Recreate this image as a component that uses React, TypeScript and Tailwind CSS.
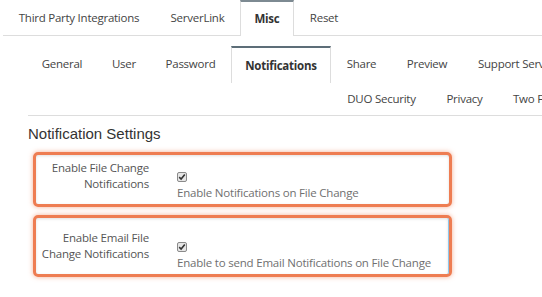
import React from "react";

const UI = { fontFamily: '"Open Sans", "Noto Sans", sans-serif' };

function Check() {
  return (
    <span className="inline-flex h-[10px] w-[10px] items-center justify-center rounded-[2px] border border-[#8a8a8a] bg-[#e6e6e6]">
      <svg width="8" height="8" viewBox="0 0 8 8">
        <path d="M1.2 4.2 L3.1 6 L6.8 1.6" fill="none" stroke="#333" strokeWidth="1.6" />
      </svg>
    </span>
  );
}

function Row({
  l1,
  l2,
  desc,
  pt,
  h,
  blue,
}: {
  l1: string;
  l2: string;
  desc: string;
  pt: string;
  h: string;
  blue?: boolean;
}) {
  return (
    <div
      className={`ml-[33px] w-[419px] ${h} rounded-[5px] border-[3px] border-[#ee7d52] shadow-[0_0_5px_rgba(238,125,82,0.6)]`}
    >
      <div
        className={`flex h-full rounded-[2px] ${pt} shadow-[inset_0_1px_3px_rgba(0,0,0,0.12)] ${
          blue ? "border-r border-[#8fc6ea]" : ""
        }`}
      >
        <div className="w-[113px] shrink-0 whitespace-nowrap text-right text-[11.5px] leading-[16px] tracking-[-0.2px] text-[#555]">
          <div>{l1}</div>
          <div>{l2}</div>
        </div>
        <div className="ml-[28px] flex flex-col">
          <div className="mt-[3px] h-[10px]">
            <Check />
          </div>
          <div className="mt-[12px] whitespace-nowrap text-[11.5px] leading-[16px] tracking-[-0.2px] text-[#707070]">
            {desc}
          </div>
        </div>
      </div>
    </div>
  );
}

export default function App() {
  return (
    <div className="h-[297px] w-[542px] overflow-hidden bg-white" style={UI}>
      {/* top tabs */}
      <div className="ml-[3px] flex h-[36px] border-b border-[#dddddd] text-[11.5px] tracking-[-0.25px] text-[#444]">
        <div className="flex h-[35px] w-[152px] shrink-0 items-center justify-center whitespace-nowrap">Third Party Integrations</div>
        <div className="flex h-[35px] w-[85px] shrink-0 items-center justify-center">ServerLink</div>
        <div className="-mb-px flex h-[36px] w-[54px] shrink-0 items-center justify-center border-x border-t-2 border-x-[#dddddd] border-t-[#7d8a92] bg-white pb-[1px] font-bold text-[#333]">
          Misc
        </div>
        <div className="flex h-[35px] w-[60px] shrink-0 items-center justify-center">Reset</div>
      </div>

      {/* second tabs */}
      <div className="ml-[28px] mt-[10px] w-[514px] overflow-hidden border-b border-[#dddddd] text-[11.5px] tracking-[-0.25px] text-[#444]">
        <div className="flex h-[36px] whitespace-nowrap">
          <div className="mr-[2px] flex w-[68px] shrink-0 items-center justify-center">General</div>
          <div className="mr-[2px] flex w-[52px] shrink-0 items-center justify-center">User</div>
          <div className="mr-[2px] flex w-[77px] shrink-0 items-center justify-center">Password</div>
          <div className="mr-[2px] flex h-[37px] w-[100px] shrink-0 items-center justify-center border-x border-t-2 border-x-[#dddddd] border-t-[#5d6e78] bg-white font-bold text-[#333]">
            Notifications
          </div>
          <div className="mr-[2px] flex w-[57px] shrink-0 items-center justify-center">Share</div>
          <div className="mr-[2px] flex w-[70px] shrink-0 items-center justify-center">Preview</div>
          <div className="flex shrink-0 items-center pl-[14px]">Support Server</div>
        </div>
        <div className="flex h-[33px] whitespace-nowrap pl-[305px] pt-[1px]">
          <div className="mr-[2px] flex w-[97px] shrink-0 items-center justify-center">DUO Security</div>
          <div className="mr-[2px] flex w-[65px] shrink-0 items-center justify-center">Privacy</div>
          <div className="flex shrink-0 items-center pl-[14px]">Two Factor</div>
        </div>
      </div>

      <div
        className="ml-[28px] mt-[9px] text-[15px] leading-[18px] text-[#333]"
        style={{ fontFamily: '"Liberation Sans", Arial, sans-serif' }}
      >
        Notification Settings
      </div>

      <div className="mt-[9px]">
        <Row
          l1="Enable File Change"
          l2="Notifications"
          desc="Enable Notifications on File Change"
          pt="pt-[5px]"
          h="h-[55px]"
        />
      </div>
      <div className="mt-[8px]">
        <Row
          l1="Enable Email File"
          l2="Change Notifications"
          desc="Enable to send Email Notifications on File Change"
          pt="pt-[12px]"
          h="h-[62px]"
          blue
        />
      </div>
    </div>
  );
}
